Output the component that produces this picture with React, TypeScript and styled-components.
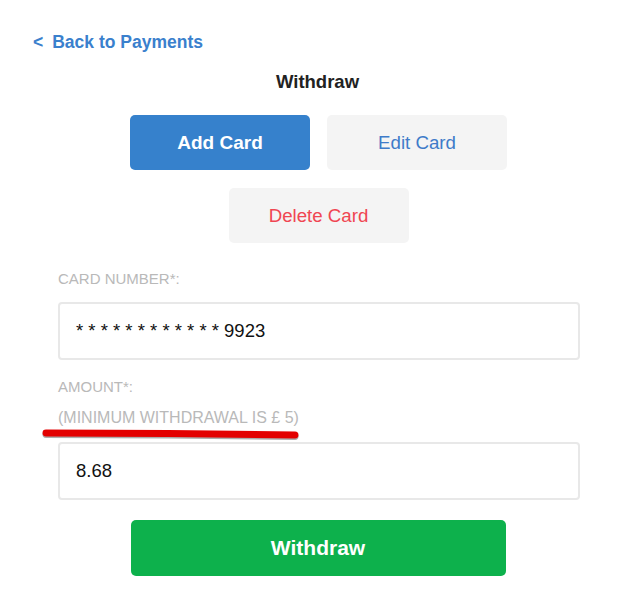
import * as React from 'react';
import styled, { createGlobalStyle } from 'styled-components';

const GlobalStyle = createGlobalStyle`
  html, body {
    margin: 0;
    padding: 0;
    background: #fff;
    font-family: "Liberation Sans", Arial, sans-serif;
  }
`;

const Page = styled.div`
  position: relative;
  width: 634px;
  height: 605px;
  padding-top: 31px;
  box-sizing: border-box;
`;

const BackLink = styled.a`
  display: inline-flex;
  gap: 9px;
  margin-left: 33px;
  color: #3a80cd;
  font-size: 17.5px;
  font-weight: 700;
  line-height: 22px;
  text-decoration: none;
  cursor: pointer;
`;

const Title = styled.h2`
  margin: 18px 0 0;
  padding-left: 1px;
  text-align: center;
  font-size: 18.5px;
  font-weight: 700;
  line-height: 22px;
  color: #222;
`;

const ButtonGrid = styled.div`
  display: flex;
  flex-wrap: wrap;
  justify-content: center;
  gap: 18px 17px;
  width: 380px;
  margin: 22px auto 0;
  padding-left: 3px;
`;

type Variant = 'primary' | 'edit' | 'delete';

const CardButton = styled.button<{ $variant: Variant }>`
  width: 180px;
  height: 55px;
  border: none;
  border-radius: 5px;
  font-family: inherit;
  font-size: ${(p) => (p.$variant === 'primary' ? '19px' : '18.7px')};
  cursor: pointer;
  background: ${(p) => (p.$variant === 'primary' ? '#3681cc' : '#f4f4f4')};
  color: ${(p) =>
    p.$variant === 'primary' ? '#fff' : p.$variant === 'edit' ? '#3e7bc9' : '#f04652'};
  font-weight: ${(p) => (p.$variant === 'primary' ? 700 : 400)};
`;

const Form = styled.div`
  margin-top: 27px;
  padding: 0 54px 0 58px;
`;

const Label = styled.div`
  color: #b9b9b9;
  font-size: 15px;
  line-height: 18px;
  text-transform: uppercase;
`;

const Hint = styled(Label)`
  position: relative;
  margin-top: 13px;
  font-size: 16px;
`;

const Field = styled.div<{ $gap: number }>`
  height: 58px;
  margin-top: ${(p) => p.$gap}px;
  border: 2px solid #e8e8e8;
  border-radius: 4px;
  box-sizing: border-box;
  display: flex;
  align-items: center;
  padding-left: 16px;
  font-size: 18.5px;
  color: #111;
  white-space: pre;
`;

const AmountLabel = styled(Label)`
  margin-top: 18px;
`;

const SubmitButton = styled.button`
  display: block;
  width: 375px;
  height: 56px;
  margin: 20px auto 0;
  position: relative;
  left: 1px;
  border: none;
  border-radius: 5px;
  background: #0db14c;
  color: #fff;
  font-family: inherit;
  font-size: 21px;
  font-weight: 700;
  cursor: pointer;
`;

const Marker = styled.svg`
  position: absolute;
  left: -17px;
  top: 18px;
  pointer-events: none;
`;

export default function App() {
  return (
    <Page>
      <GlobalStyle />
      <BackLink>
        <span>&lt;</span>
        <span>Back to Payments</span>
      </BackLink>
      <Title>Withdraw</Title>
      <ButtonGrid>
        <CardButton $variant="primary">Add Card</CardButton>
        <CardButton $variant="edit">Edit Card</CardButton>
        <CardButton $variant="delete">Delete Card</CardButton>
      </ButtonGrid>
      <Form>
        <Label>Card number*:</Label>
        <Field $gap={14}>* * * * * * * * * * * * 9923</Field>
        <AmountLabel>Amount*:</AmountLabel>
        <Hint>
          (Minimum withdrawal is £ 5)
          <Marker width="262" height="16" viewBox="0 0 262 16">
            <path
              d="M5 6 C 80 6, 180 7, 254 8"
              stroke="#5a5a5a"
              strokeOpacity="0.5"
              strokeWidth="7"
              strokeLinecap="round"
              fill="none"
              transform="translate(0 1.5)"
            />
            <path
              d="M5 6 C 80 6, 180 7, 254 8"
              stroke="#e30000"
              strokeWidth="7"
              strokeLinecap="round"
              fill="none"
            />
          </Marker>
        </Hint>
        <Field $gap={15}>8.68</Field>
      </Form>
      <SubmitButton>Withdraw</SubmitButton>
    </Page>
  );
}
